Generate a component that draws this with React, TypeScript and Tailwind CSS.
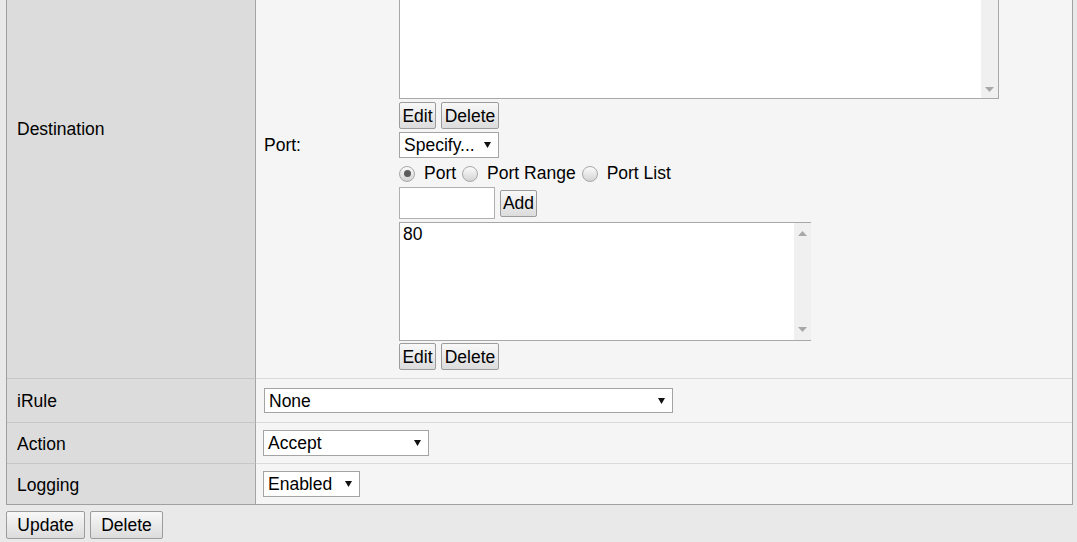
import type { ReactNode } from 'react'

function Btn({ children, w, h = 'h-[27px]' }: { children: ReactNode; w: string; h?: string }) {
	return (
		<button
			type="button"
			className={`${w} ${h} flex items-center justify-center rounded-[2px] border border-[#9c9c9c] bg-linear-to-b from-[#f8f8f8] to-[#dcdcdc] pt-[2px] leading-none text-black`}
		>
			{children}
		</button>
	)
}

function Caret() {
	return (
		<svg width="7" height="6" viewBox="0 0 7 6" className="shrink-0">
			<polygon points="0,0 7,0 3.5,6" fill="#111" />
		</svg>
	)
}

function Select({ value, w, h = 'h-[26px]' }: { value: string; w: string; h?: string }) {
	return (
		<div
			className={`${w} ${h} flex items-center justify-between border border-[#a4a4a4] bg-white pl-[4px] pr-[7px] leading-none`}
		>
			<span className="pt-[2px]">{value}</span>
			<Caret />
		</div>
	)
}

function ScrollArrow({ up }: { up?: boolean }) {
	return (
		<svg width="9" height="5" viewBox="0 0 9 5">
			<polygon points={up ? '0,5 9,5 4.5,0' : '0,0 9,0 4.5,5'} fill="#a8a8a8" />
		</svg>
	)
}

function Radio({ checked }: { checked?: boolean }) {
	return (
		<span className="flex h-[16px] w-[16px] shrink-0 items-center justify-center rounded-full border border-[#a8a8a8] bg-linear-to-b from-[#fbfbfb] to-[#d4d4d4]">
			{checked && <span className="h-[7px] w-[7px] rounded-full bg-[#5c5c5c]" />}
		</span>
	)
}

function Label({ children, last }: { children: ReactNode; last?: boolean }) {
	return (
		<div
			className={`flex w-[249px] shrink-0 items-center border-r border-[#a4a4a4] bg-[#dcdcdc] pl-[10px] pt-[2px] ${
				last ? '' : 'border-b border-b-[#c6c6c6]'
			}`}
		>
			{children}
		</div>
	)
}

export default function App() {
	return (
		<div className="min-h-screen overflow-hidden bg-[#e9e9e9] font-['Liberation_Sans',Arial,sans-serif] text-[17.5px] text-black">
			<div className="-mt-[123px] ml-[6px] w-[1067px] border border-[#a0a0a0]">
				{/* Destination */}
				<div className="flex">
					<Label>Destination</Label>
					<div className="grid flex-1 grid-cols-[135px_1fr] border-b border-[#dadada] bg-[#f5f5f5] pb-[8px] pl-[8px] pt-[8px]">
						<div />
						<div>
							<div className="flex h-[213px] w-[600px] border border-[#a8a8a8] bg-white">
								<div className="flex-1" />
								<div className="flex w-[17px] flex-col items-center justify-end bg-[#f0f0f0] pb-[6px]">
									<ScrollArrow />
								</div>
							</div>
							<div className="mt-[3px] flex gap-[5px]">
								<Btn w="w-[37px]">Edit</Btn>
								<Btn w="w-[58px]">Delete</Btn>
							</div>
						</div>

						<div className="mt-[3px] flex h-[26px] items-center pt-[1px]">Port:</div>
						<div className="mt-[3px]">
							<Select value="Specify..." w="w-[100px]" />
							<div className="flex h-[29px] items-center pt-[2px]">
								<Radio checked />
								<span className="ml-[9px]">Port</span>
								<span className="ml-[6px]">
									<Radio />
								</span>
								<span className="ml-[9px]">Port Range</span>
								<span className="ml-[6px]">
									<Radio />
								</span>
								<span className="ml-[9px]">Port List</span>
							</div>
							<div className="flex items-center gap-[5px]">
								<div className="h-[32px] w-[96px] border border-[#b0b0b0] bg-white" />
								<Btn w="w-[37px]">Add</Btn>
							</div>
							<div className="mt-[3px] flex h-[119px] w-[412px] border border-r-0 border-[#a8a8a8] bg-white">
								<div className="flex-1 pl-[3px] pt-[1px] leading-[20px]">80</div>
								<div className="flex w-[17px] flex-col items-center justify-between bg-[#f0f0f0] pb-[8px] pt-[8px]">
									<ScrollArrow up />
									<ScrollArrow />
								</div>
							</div>
							<div className="mt-[2px] flex gap-[5px]">
								<Btn w="w-[37px]">Edit</Btn>
								<Btn w="w-[58px]">Delete</Btn>
							</div>
						</div>
					</div>
				</div>

				{/* iRule */}
				<div className="flex h-[44px]">
					<Label>iRule</Label>
					<div className="flex flex-1 items-center border-b border-[#dadada] bg-[#f5f5f5] pl-[8px]">
						<Select value="None" w="w-[409px]" h="h-[25px]" />
					</div>
				</div>

				{/* Action */}
				<div className="flex h-[41px]">
					<Label>Action</Label>
					<div className="flex flex-1 items-center border-b border-[#dadada] bg-[#f5f5f5] pl-[7px]">
						<Select value="Accept" w="w-[166px]" />
					</div>
				</div>

				{/* Logging */}
				<div className="flex h-[40px]">
					<Label last>Logging</Label>
					<div className="flex flex-1 items-center bg-[#f5f5f5] pl-[7px]">
						<Select value="Enabled" w="w-[97px]" />
					</div>
				</div>
			</div>

			<div className="ml-[6px] mt-[6px] flex gap-[5px]">
				<Btn w="w-[79px]" h="h-[28px]">
					Update
				</Btn>
				<Btn w="w-[73px]" h="h-[28px]">
					Delete
				</Btn>
			</div>
		</div>
	)
}
